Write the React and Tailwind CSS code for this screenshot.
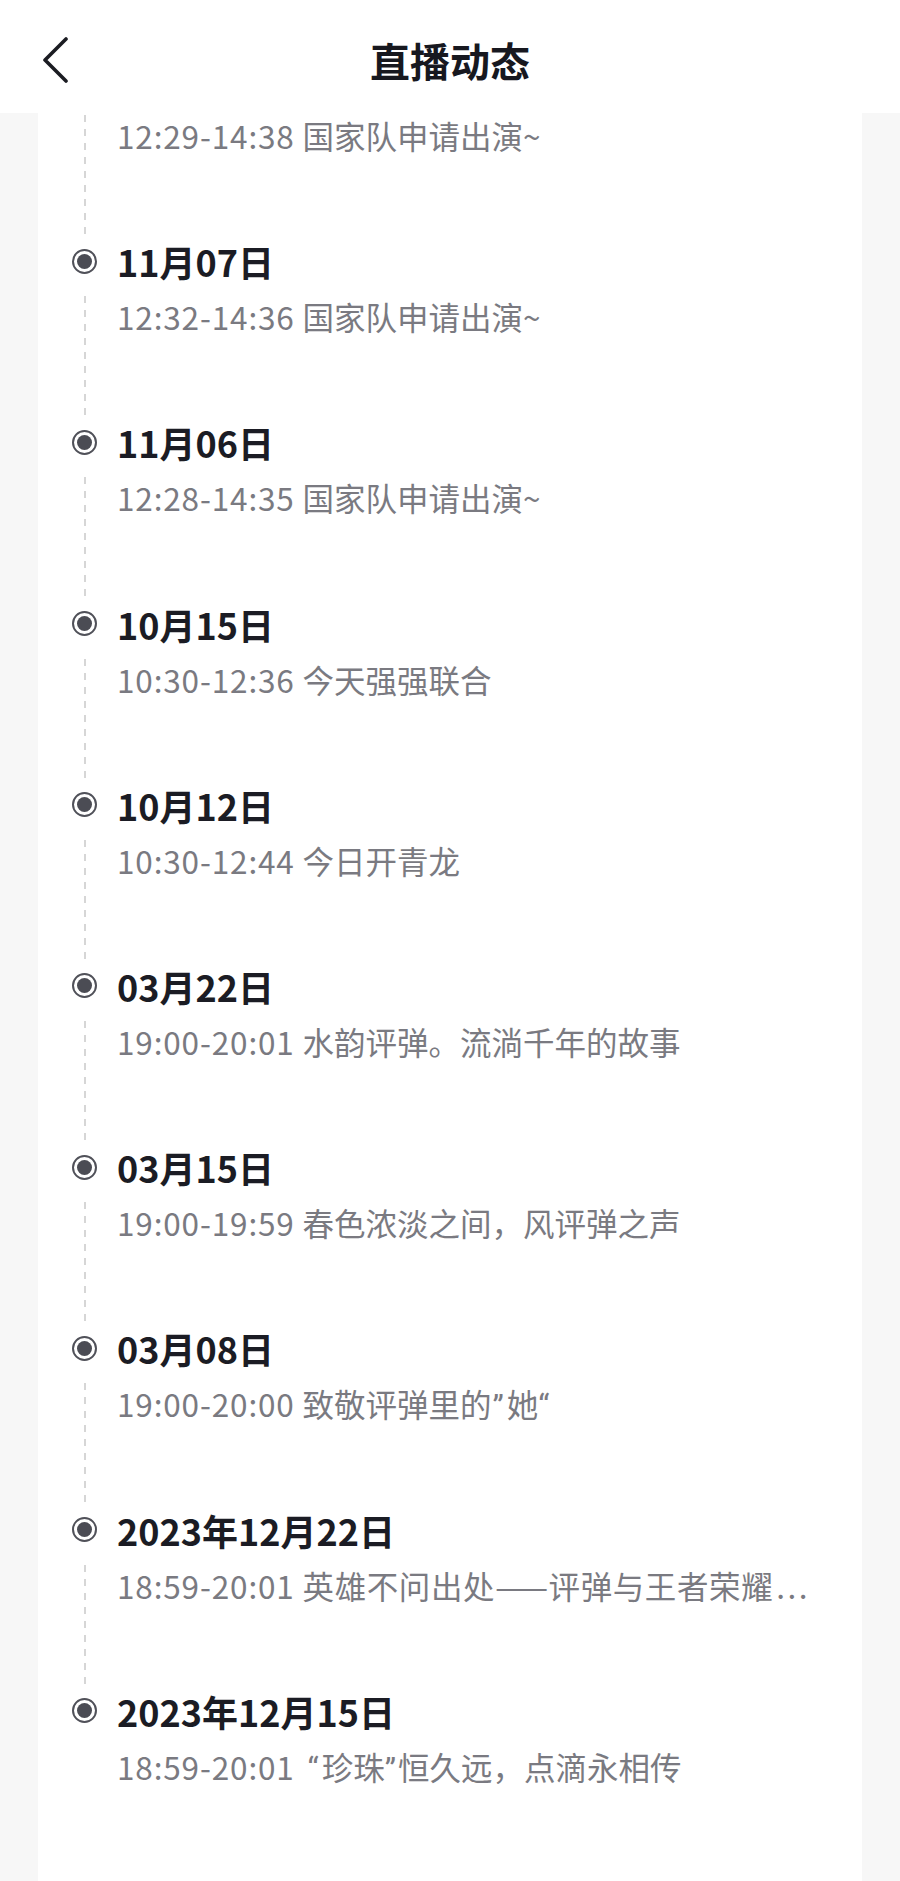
import React from 'react';

// latin quotes in the reference are narrow, so they get a latin font
const Q = ({ children, className = '' }) => (
  <span className={`inline-block font-['Roboto',sans-serif] ${className}`}>{children}</span>
);

const items = [
  { date: '11月08日', time: '12:29-14:38', title: '国家队申请出演~' },
  { date: '11月07日', time: '12:32-14:36', title: '国家队申请出演~' },
  { date: '11月06日', time: '12:28-14:35', title: '国家队申请出演~' },
  { date: '10月15日', time: '10:30-12:36', title: '今天强强联合' },
  { date: '10月12日', time: '10:30-12:44', title: '今日开青龙' },
  { date: '03月22日', time: '19:00-20:01', title: '水韵评弹。流淌千年的故事' },
  { date: '03月15日', time: '19:00-19:59', title: '春色浓淡之间，风评弹之声' },
  {
    date: '03月08日',
    time: '19:00-20:00',
    title: (
      <>
        致敬评弹里的<Q className="pl-[1px] pr-[3px]">”</Q>她<Q>“</Q>
      </>
    ),
  },
  {
    date: '2023年12月22日',
    time: '18:59-20:01',
    title: (
      <>
        <span className="tracking-[0.6px]">英雄不问出处——评弹与王者荣耀</span>
        <span className="pl-[3px] tracking-[2.5px]">...</span>
      </>
    ),
  },
  {
    date: '2023年12月15日',
    time: '18:59-20:01',
    title: (
      <>
        <Q className="pl-[5px] pr-[3px]">“</Q>珍珠<Q className="pr-[2px]">”</Q>恒久远，点滴永相传
      </>
    ),
  },
];

const TimelineItem = ({ date, time, title, last }) => {
  return (
    <div className="flex h-[181.2px]">
      {/* dot + dashed line */}
      <div className="flex w-[25px] flex-col items-center">
        <div className="flex h-[50px] items-center">
          <div className="flex h-[25px] w-[25px] items-center justify-center rounded-full border-2 border-[#505159]">
            <div className="h-[15px] w-[15px] rounded-full bg-[#4b4c54]" />
          </div>
        </div>
        {!last && (
          <div className="mt-[10px] w-[2px] flex-1 bg-[linear-gradient(#d6d6d6_50%,transparent_50%)] bg-[length:2px_14px]" />
        )}
      </div>

      {/* text */}
      <div className="ml-[20px] flex-1 pr-[40px]">
        <div className="text-[36px] font-bold leading-[50px] text-[#1b1c24]">{date}</div>
        <div className="mt-[8px] whitespace-nowrap text-[31.5px] leading-[44px] text-[#7a7a81]">
          <span className="tracking-[0.85px]">{time} </span>
          {title}
        </div>
      </div>
    </div>
  );
};

const App = () => {
  return (
    <div
      className="flex h-[1881px] w-[900px] flex-col overflow-hidden bg-[#f7f7f7]"
      style={{ fontFamily: '"Noto Sans CJK SC", "Noto Sans", sans-serif' }}
    >
      {/* Header */}
      <div className="grid h-[113px] shrink-0 grid-cols-[120px_1fr_120px] items-center bg-white pt-[6px]">
        <div className="pl-[41px]">
          <svg width="28" height="46" viewBox="0 0 28 46" fill="none">
            <path d="M25 2 L4 23 L25 44" stroke="#1b1c22" strokeWidth="3.6" strokeLinecap="round" strokeLinejoin="round" />
          </svg>
        </div>
        <h1 className="text-center text-[40px] font-bold leading-none text-[#17181f]">直播动态</h1>
        <div />
      </div>

      {/* Timeline card */}
      <div className="flex-1 overflow-hidden px-[38px]">
        <div className="flex h-full flex-col bg-white pl-[34px]">
          <div className="-mt-[58px]">
            {items.map((item, i) => (
              <TimelineItem
                key={i}
                date={item.date}
                time={item.time}
                title={item.title}
                last={i === items.length - 1}
              />
            ))}
          </div>
        </div>
      </div>
    </div>
  );
};

export default App;
